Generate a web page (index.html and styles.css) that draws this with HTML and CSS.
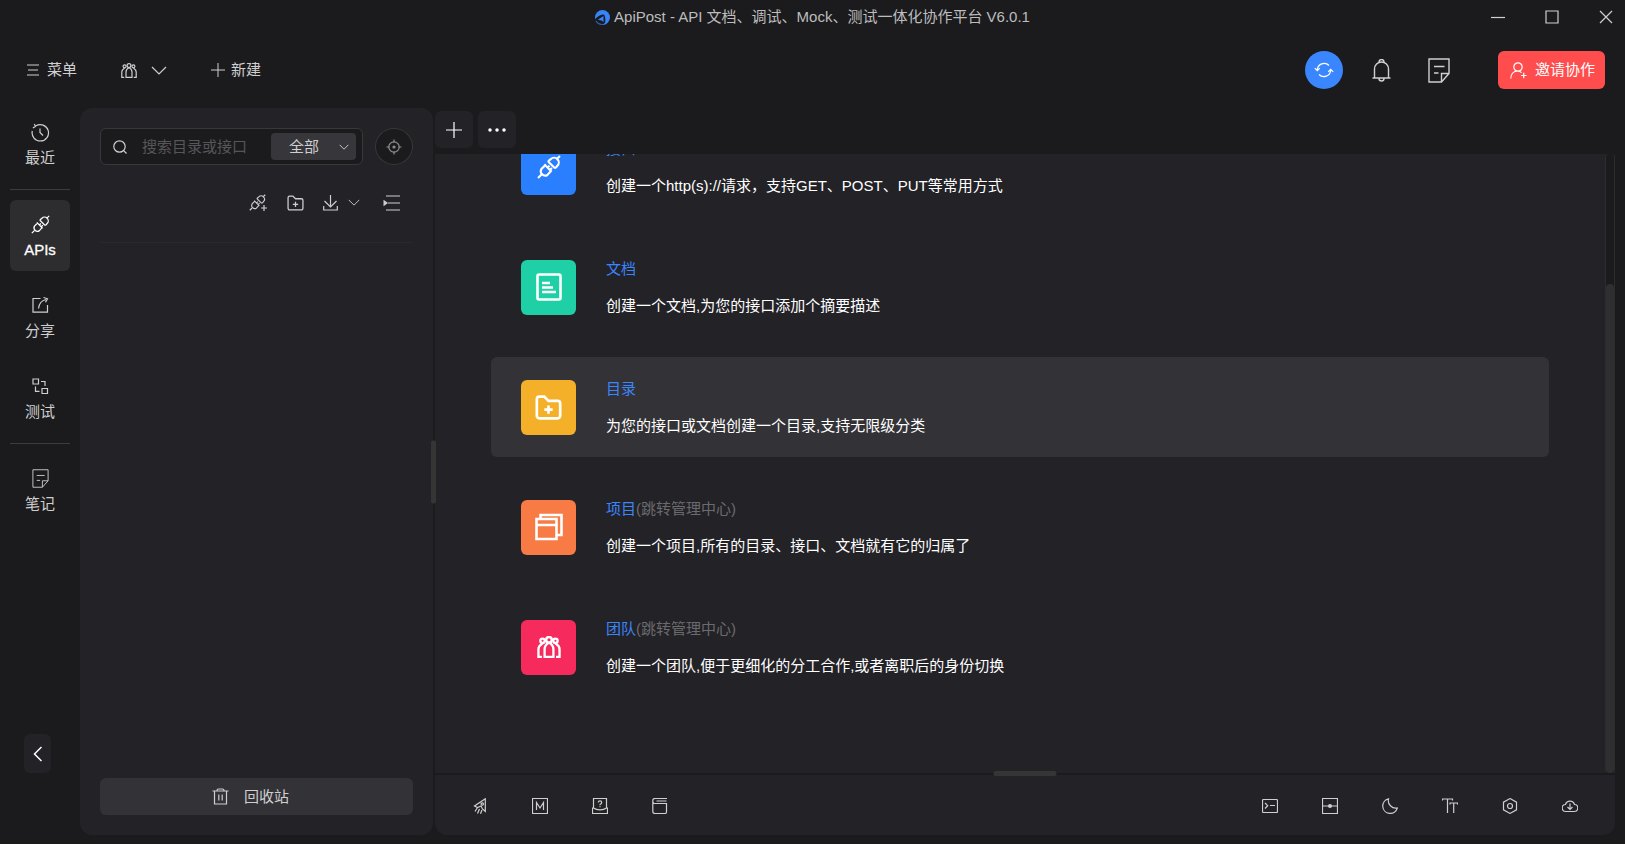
FILE: index.html
```html
<!DOCTYPE html>
<html lang="zh-CN">
<head>
<meta charset="utf-8">
<title>ApiPost</title>
<link rel="stylesheet" href="styles.css">
</head>
<body>
<svg class="defs" aria-hidden="true">
  <symbol id="plug" viewBox="0 0 18 18"><path d="M.8 17.2l2.400-2.400M14.800 3.200L17.200.8M6.200 7.600L3.300 10.500a3.300 3.300 0 0 0 4.500 4.500L10.500 12M5.500 7l5.500 5.600M7.800 9.600l1.600-1.600M9.700 11.200l1.500-1.500M8.700 5.200l4.200 4.200a1 1 0 0 0 1.300 0l1.100-1.300a3.500 3.500 0 0 0-5-5L8.700 4.500a.6.600 0 0 0 0 .7z"/></symbol>
  <symbol id="team" viewBox="0 0 16 15"><circle cx="8" cy="2.600" r="1.900"/><circle cx="3.600" cy="3.300" r="1.500"/><circle cx="12.400" cy="3.300" r="1.500"/><path d="M3.200 14.300H.8V9C.8 7 2 6 3.600 4.900M12.800 14.300h2.400V9c0-2-1.200-3-2.800-4.100M5 14.300V9c0-2 1.500-3.600 3-4.500C9.500 5.400 11 7 11 9v5.300z"/></symbol>
  <symbol id="note" viewBox="0 0 22 25"><path d="M1 1h20v14.500L13.500 24H1zM21 15.500h-7.500V24M6 8.500h10.500M6 15h4.500"/></symbol>
  <symbol id="down" viewBox="0 0 16 9"><path d="M1 1l7 7 7-7"/></symbol>
  <symbol id="folder" viewBox="0 0 16 15"><path d="M1 12.500V2.500A1.500 1.500 0 0 1 2.500 1h3L8 3.500h5.500A1.500 1.500 0 0 1 15 5v7.500a1.500 1.500 0 0 1-1.500 1.500h-11A1.500 1.500 0 0 1 1 12.500zM5.500 8.800h5M8 6.300v5"/></symbol>
</svg>
<div class="app">
  <header class="titlebar">
    <h1 class="title">
      <svg class="logo" viewBox="0 0 15 15"><circle cx="7.500" cy="7.500" r="7.500" fill="#3784f8"/><path d="M0 9.500Q4 4.500 9 4.500 11 8 10 13L6.500 15Q1 14 0 9.500z" fill="#1b1b1d"/><path d="M2.800 9.800L8.500 6v6L6.500 10.500z" fill="#3784f8"/><path d="M.8 11q2 3.200 6.200 3.500" stroke="#2b62b8" fill="none"/></svg>
      <span>ApiPost - API 文档、调试、Mock、测试一体化协作平台 V6.0.1</span>
    </h1>
    <div class="window-controls">
      <button aria-label="最小化"><svg width="14" height="14"><path d="M0 7.500h14"/></svg></button>
      <button aria-label="最大化"><svg width="14" height="14"><path d="M1 1h12v12H1z"/></svg></button>
      <button aria-label="关闭"><svg width="14" height="14"><path d="M1 1l12 12M13 1L1 13"/></svg></button>
    </div>
  </header>

  <div class="toolbar">
    <button class="tool menu"><svg width="12" height="12"><path d="M0 1h12M1 6h10M0 11h12"/></svg>菜单</button>
    <button class="tool team" aria-label="团队"><svg width="16" height="15"><use href="#team"/></svg><svg width="16" height="9"><use href="#down"/></svg></button>
    <button class="tool create"><svg width="14" height="14"><path d="M0 7h14M7 0v14"/></svg>新建</button>
    <div class="toolbar-right">
      <button class="sync" aria-label="同步"><svg width="20" height="16" viewBox="0 0 20 16"><path d="M3.300 8A6.800 6.800 0 0 1 15 3.500M16.700 8a6.800 6.800 0 0 1-11.700 4.500M.8 6.200L3.300 8.700 5.800 6.200M14.200 9.800l2.500-2.500 2.500 2.500"/></svg></button>
      <button class="plain bell" aria-label="通知"><svg width="19" height="23" viewBox="0 0 19 23"><path d="M.5 19h18M2.500 19V10a7 7 0 0 1 14 0v9M7 3.500V3a2.500 2.500 0 0 1 5 0v.5M7 19.500a2.500 2.500 0 0 0 5 0"/></svg></button>
      <button class="plain" aria-label="笔记"><svg width="22" height="25"><use href="#note"/></svg></button>
      <button class="invite"><svg width="17" height="17" viewBox="0 0 17 17"><circle cx="8" cy="5" r="4.200"/><path d="M.8 16.500c0-4 2.500-7 6-7.300M8.500 9.200c1.500.2 2.500.8 3 1.600M11 13.500h5.500M13.700 10.800v5.400"/></svg>邀请协作</button>
    </div>
  </div>

  <div class="body">
    <nav class="rail">
      <button class="rail-item"><svg width="19" height="19" viewBox="0 0 19 19"><path d="M5 2.800A8.200 8.200 0 1 1 1.300 8M3.300 1l1.200 2.500L1.800 5M9 5.500v4l3 3"/></svg>最近</button>
      <hr>
      <button class="rail-item active"><svg width="19" height="19"><use href="#plug"/></svg>APIs</button>
      <button class="rail-item"><svg width="19" height="19" viewBox="0 0 19 19"><path d="M9.500 2.500H2v13.700h14.500V9M7.500 12.500C8 8 10.500 4.500 15 3.500M12.500 1.500l4 1.300-2 3.500"/></svg>分享</button>
      <button class="rail-item"><svg width="19" height="19" viewBox="0 0 19 19"><path d="M2 2h5.500v5H2zM11 11.500h5.500v5H11zM10 4.500h4v4.500M4.500 9.500v4.800H8.500"/></svg>测试</button>
      <hr>
      <button class="rail-item"><svg width="19" height="19"><use href="#note"/></svg>笔记</button>
      <button class="collapse" aria-label="收起"><svg width="9" height="16" viewBox="0 0 9 16"><path d="M8.500 1L1.500 8l7 7"/></svg></button>
    </nav>

    <aside class="side">
      <div class="search-row">
        <div class="search">
          <svg width="14" height="14" viewBox="0 0 14 14"><circle cx="6.500" cy="6.500" r="5.700"/><path d="M10.700 10.700L13.500 13.500"/></svg>
          <input type="text" aria-label="搜索" placeholder="搜索目录或接口">
          <label class="filter"><select aria-label="范围"><option>全部</option></select><svg width="10" height="6"><use href="#down"/></svg></label>
        </div>
        <button class="locate" aria-label="定位"><svg width="16" height="16" viewBox="0 0 16 16"><circle cx="8" cy="8" r="5.200"/><circle cx="8" cy="8" r="1" fill="currentColor"/><path d="M8 .5v3M8 12.500v3M.5 8h3M12.500 8h3"/></svg></button>
      </div>
      <div class="actions">
        <button aria-label="新建接口"><svg width="19" height="18" viewBox="0 0 19 18"><g><use href="#plug" width="17" height="17"/></g><path class="cover" d="M11 10h8v8h-8z"/><path d="M12 14h6M15 11v6"/></svg></button>
        <button aria-label="新建目录"><svg width="17" height="16"><use href="#folder"/></svg></button>
        <button class="import" aria-label="导入"><svg width="15" height="16" viewBox="0 0 15 16"><path d="M7.500 0v11M1.500 6l6 6 6-6M.7 11v4h13.600v-4"/></svg><svg width="12" height="7"><use href="#down"/></svg></button>
        <button aria-label="折叠"><svg width="17" height="16" viewBox="0 0 17 16"><path d="M3 1h14M5 8h12M3 15h14"/><path d="M.5 4.800v6.400L5 8z" fill="currentColor" stroke="none"/></svg></button>
      </div>
      <button class="trash"><svg width="17" height="17" viewBox="0 0 17 17"><path d="M.5 3h16M5 2.500Q5 1 6.500 1h4Q12 1 12 2.500M2.500 3v13h12V3M6.800 6.500v6M10.200 6.500v6"/></svg>回收站</button>
      <span class="grip grip-v"></span>
    </aside>

    <main class="main">
      <div class="tabs">
        <button aria-label="新标签"><svg width="16" height="16"><path d="M0 8h16M8 0v16"/></svg></button>
        <button aria-label="更多"><svg width="18" height="4"><path d="M2 2h.01M9 2h.01M16 2h.01" class="dots"/></svg></button>
      </div>
      <section class="view">
        <div class="cards">
          <article class="card">
            <span class="tile blue"><svg width="24" height="24"><use href="#plug"/></svg></span>
            <div><h2><a href="#">接口</a></h2><p>创建一个http(s)://请求，支持GET、POST、PUT等常用方式</p></div>
          </article>
          <article class="card">
            <span class="tile green"><svg width="26" height="28" viewBox="0 0 26 28"><rect x="1.500" y="1.500" width="23" height="25" rx="1.500"/><path d="M6 10h8M6 14.500h11M6 19h14"/></svg></span>
            <div><h2><a href="#">文档</a></h2><p>创建一个文档,为您的接口添加个摘要描述</p></div>
          </article>
          <article class="card hover">
            <span class="tile yellow"><svg width="27" height="25"><use href="#folder"/></svg></span>
            <div><h2><a href="#">目录</a></h2><p>为您的接口或文档创建一个目录,支持无限级分类</p></div>
          </article>
          <article class="card">
            <span class="tile orange"><svg width="28" height="28" viewBox="0 0 28 28"><path d="M1.500 6h20v20h-20zM1.500 12h20M5.500 6V2h21v20h-5"/></svg></span>
            <div><h2><a href="#">项目</a><small>(跳转管理中心)</small></h2><p>创建一个项目,所有的目录、接口、文档就有它的归属了</p></div>
          </article>
          <article class="card">
            <span class="tile red"><svg width="24" height="22"><use href="#team"/></svg></span>
            <div><h2><a href="#">团队</a><small>(跳转管理中心)</small></h2><p>创建一个团队,便于更细化的分工合作,或者离职后的身份切换</p></div>
          </article>
        </div>
        <div class="scroll"><div class="thumb"></div></div>
      </section>
      <footer class="status">
        <span class="grip grip-h"></span>
        <button aria-label="快捷"><svg width="16" height="16" viewBox="0 0 16 16"><path d="M13.300 .8L2.500 8l3 1.500L9 8l1.500 3 2.800 2.500zM5.500 9.500L3 13.500M7.500 11L5.500 15.500M10 12L8.500 15.800"/><circle cx="10.300" cy="6" r="1.200"/></svg></button>
        <button aria-label="Mock"><svg width="16" height="16" viewBox="0 0 16 16"><path d="M.5.500h15v15H.5zM4.500 12V4.500L8 10l3.500-5.500V12"/></svg></button>
        <button aria-label="帮助"><svg width="16" height="16" viewBox="0 0 16 16"><path d="M1.500 10V.5h13V10M.5 10v5.500h15V10h-1Q12 11.800 8 11.800T1.500 10zM6.300 4.500q0-1.700 1.700-1.700t1.700 1.600Q9.700 5.500 8 6.500v.8M8 8.300v1"/></svg></button>
        <button aria-label="文档"><svg width="16" height="16" viewBox="0 0 16 16"><path d="M15 .5H3Q.8.500.8 2.500V13.500Q.8 15.500 3 15.500H13Q14.500 15.500 14.500 14V5.500H2.500Q.8 5.500.8 3M4.500 3h10"/></svg></button>
        <span class="spacer"></span>
        <button aria-label="控制台"><svg width="16" height="16" viewBox="0 0 16 16"><rect x=".5" y="1.500" width="15" height="13" rx="1"/><path d="M3 5l2.700 2.700L3 10.500M8 7.500h5"/></svg></button>
        <button aria-label="布局"><svg width="16" height="16" viewBox="0 0 16 16"><path d="M.5.500h15v15H.5zM.5 8h15"/><circle cx="8" cy="8" r="2" fill="currentColor" stroke="none"/></svg></button>
        <button aria-label="主题"><svg width="16" height="16" viewBox="0 0 16 16"><path d="M6.500.8A7.400 7.400 0 1 0 15.300 10 7.600 7.600 0 0 1 6.500.8z"/></svg></button>
        <button aria-label="字体"><svg width="16" height="16" viewBox="0 0 16 16"><path d="M.5 2.500v-1.500h10v1.500M5.500 1v14M8 6.500V5h7.500v1.500M11.700 5v10"/></svg></button>
        <button aria-label="设置"><svg width="16" height="16" viewBox="0 0 16 16"><path d="M8 .6L14.500 4.200v7.600L8 15.400 1.500 11.800V4.200z"/><circle cx="8" cy="8" r="2.500"/></svg></button>
        <button aria-label="云端"><svg width="16" height="16" viewBox="0 0 16 16"><path d="M4 13.500A3.500 3.500 0 0 1 3.500 6.500 4.700 4.700 0 0 1 12.500 6.500 3.500 3.500 0 0 1 12 13.500zM8 5.500v6M5.500 9L8 11.500 10.500 9"/></svg></button>
      </footer>
    </main>
  </div>
</div>
</body>
</html>
```
FILE: styles.css
```css
* { box-sizing: border-box; }
body {
  margin: 0;
  font: 15px/20px "Liberation Sans", "Noto Sans CJK SC", sans-serif;
  color: #cfcfcf;
  background: #1b1b1d;
}
button, input, select { font: inherit; color: inherit; }
button {
  display: flex;
  align-items: center;
  justify-content: center;
  padding: 0;
  border: 0;
  background: none;
}
svg {
  flex: none;
  fill: none;
  stroke: currentColor;
  stroke-width: 1.2;
}
h1, h2, p { margin: 0; font-weight: 400; font-size: 15px; }
.defs { position: absolute; width: 0; height: 0; }

.app {
  display: flex;
  flex-direction: column;
  height: 100vh;
  border-bottom: 1px solid #fff;
}

.titlebar { position: relative; display: flex; justify-content: center; height: 34px; }
.title { display: flex; align-items: center; gap: 4px; color: #bdbdbd; }
.logo { width: 15px; height: 15px; stroke: none; }
.window-controls {
  position: absolute;
  right: 12px;
  top: 0;
  display: flex;
  gap: 40px;
  height: 34px;
}
.window-controls button { width: 14px; }

.toolbar {
  display: flex;
  align-items: center;
  height: 74px;
  padding: 0 20px 2px 27px;
}
.tool { gap: 8px; }
.tool.team { margin-left: 44px; gap: 14px; }
.tool.create { margin-left: 44px; gap: 6px; }
.menu svg, .create svg { stroke-width: 1; }
.toolbar-right { display: flex; align-items: center; margin-left: auto; }
.sync { width: 38px; height: 38px; border-radius: 50%; background: #3a86ff; color: #fff; }
.plain { width: 22px; margin-left: 35px; }
.bell { margin-left: 28px; }
.bell svg, .plain svg { stroke-width: 1.4; }
.invite {
  gap: 8px;
  height: 38px;
  margin-left: 48px;
  padding: 0 10px 0 12px;
  border-radius: 6px;
  background: #ff4d4d;
  color: #fff;
}

.body { flex: 1; display: flex; min-height: 0; padding: 0 10px 9px 0; }

.rail { display: flex; flex-direction: column; gap: 10px; width: 80px; padding: 0 10px; }
.rail hr { width: 100%; height: 1px; margin: 0; border: 0; background: #3c3c3f; }
.rail-item { flex-direction: column; gap: 6px; height: 71px; padding-top: 4px; border-radius: 6px; }
.rail-item.active { background: #2d2d2f; color: #fff; -webkit-text-stroke: 0.3px #fff; }
.collapse {
  width: 27px;
  height: 39px;
  margin: auto 0 62px 14px;
  border-radius: 6px;
  background: #232327;
  color: #fff;
}
.collapse svg { stroke-width: 1.5; }

.side {
  position: relative;
  display: flex;
  flex-direction: column;
  width: 353px;
  margin-right: 2px;
  padding: 20px;
  border-radius: 12px;
  background: #232227;
}
.search-row { display: flex; gap: 12px; }
.search {
  flex: 1;
  display: flex;
  align-items: center;
  min-width: 0;
  height: 37px;
  padding: 0 6px 0 12px;
  border: 1px solid #38383b;
  border-radius: 6px;
  background: #1b1b1d;
}
.search input {
  flex: 1;
  min-width: 0;
  height: 30px;
  padding: 0 0 0 15px;
  border: 0;
  outline: 0;
  background: none;
}
.search input::placeholder { color: #56565a; }
.filter { position: relative; display: flex; align-items: center; }
.filter select {
  width: 85px;
  height: 27px;
  padding: 0 0 0 18px;
  border: 0;
  border-radius: 4px;
  background: #37363b;
  appearance: none;
}
.filter svg { position: absolute; right: 7px; pointer-events: none; stroke-width: 1.5; }
.locate {
  width: 38px;
  height: 37px;
  border: 1px solid #38383b;
  border-radius: 50%;
  background: #1b1b1d;
  color: #8f8f91;
}
.actions {
  display: flex;
  align-items: center;
  justify-content: flex-end;
  gap: 19px;
  height: 78px;
  padding: 0 13px 2px 0;
  border-bottom: 1px solid #29292d;
}
.actions .import { gap: 10px; }
.actions button:last-child { margin-left: 4px; }
.cover { fill: #232227; stroke: none; }
.trash {
  gap: 15px;
  height: 37px;
  margin-top: auto;
  padding-right: 12px;
  border-radius: 6px;
  background: #333237;
}

.grip { position: absolute; background: #353535; border-radius: 2px; }
.grip-v { top: 50%; right: -3px; width: 5px; height: 63px; transform: translateY(-50%); }
.grip-h { top: -4px; left: 50%; width: 63px; height: 5px; transform: translateX(-50%); }

.main { flex: 1; display: flex; flex-direction: column; min-width: 0; }
.tabs { display: flex; gap: 5px; height: 46px; padding-top: 3px; }
.tabs button { width: 38px; height: 37px; border-radius: 6px; background: #232227; color: #fff; }
.dots { stroke-width: 3.5; stroke-linecap: round; }
.view {
  flex: 1;
  display: flex;
  min-height: 0;
  border-radius: 0 4px 0 0;
  background: #232227;
}
.cards {
  flex: 1;
  display: flex;
  flex-direction: column;
  justify-content: flex-end;
  gap: 20px;
  padding: 0 56px 76px;
  overflow: hidden;
}
.card {
  flex: none;
  display: flex;
  align-items: center;
  gap: 30px;
  height: 100px;
  padding-left: 30px;
  border-radius: 6px;
}
.card.hover { background: #333237; }
.card h2 { margin-bottom: 17px; }
.card a { color: #3a86ff; text-decoration: none; }
.card small { font-size: 15px; color: #6b6b6d; }
.card p { color: #fff; }
.tile {
  display: flex;
  align-items: center;
  justify-content: center;
  width: 55px;
  height: 55px;
  border-radius: 6px;
  color: #fff;
}
.tile svg { stroke-width: 2.6; }
.tile use { stroke-width: 1.6; }
.tile.blue { background: #2a7fff; }
.tile.green { background: #1fcfa5; }
.tile.yellow { background: #f5b029; }
.tile.orange { background: #f87a45; }
.tile.red { background: #f62a5c; }
.scroll {
  display: flex;
  flex-direction: column;
  justify-content: flex-end;
  width: 10px;
  border: 1px solid #2d2d30;
  border-width: 0 1px;
  border-radius: 4px;
  background: #1b1b1d;
}
.thumb { height: 79%; border-radius: 4px; background: #2f2f31; }
.status {
  position: relative;
  display: flex;
  height: 60px;
  margin-top: 2px;
  padding: 2px 15px 0;
  border-radius: 0 0 12px 12px;
  background: #232227;
}
.status button { width: 60px; }
.spacer { flex: 1; }
```
